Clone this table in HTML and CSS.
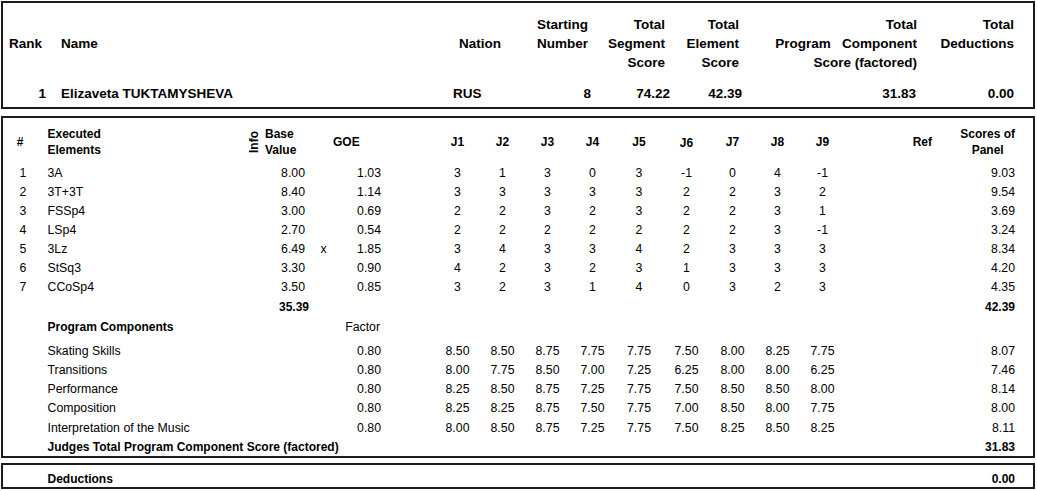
FILE: index.html
```html
<!DOCTYPE html>
<html>
<head>
<meta charset="utf-8">
<link rel="stylesheet" href="styles.css">
</head>
<body>
<div class="sheet">
  <section class="box summary">
    <div class="sum-grid sum-head">
      <div class="sh rank mid">Rank</div>
      <div class="sh name mid">Name</div>
      <div class="sh nation mid">Nation</div>
      <div class="sh start">Starting<br>Number</div>
      <div class="sh seg">Total<br>Segment<br>Score</div>
      <div class="sh el">Total<br>Element<br>Score</div>
      <div class="sh pcs">Total<br>Program&nbsp;&nbsp; Component<br>Score (factored)</div>
      <div class="sh ded">Total<br>Deductions</div>
    </div>
    <div class="sum-grid sum-data">
      <div class="sd rank">1</div>
      <div class="sd name">Elizaveta TUKTAMYSHEVA</div>
      <div class="sd nation">RUS</div>
      <div class="sd start">8</div>
      <div class="sd seg">74.22</div>
      <div class="sd el">42.39</div>
      <div class="sd pcs">31.83</div>
      <div class="sd ded">0.00</div>
    </div>
  </section>

  <section class="box details">
    <div class="row head">
      <div class="c-num hnum">#</div>
      <div class="c-name">Executed<br>Elements</div>
      <div class="c-info"><span class="info">Info</span></div>
      <div class="c-base hbase">Base<br>Value</div>
      <div class="c-goe-h">GOE</div>
      <div class="c-j1 j">J1</div>
      <div class="c-j2 j">J2</div>
      <div class="c-j3 j">J3</div>
      <div class="c-j4 j">J4</div>
      <div class="c-j5 j">J5</div>
      <div class="c-j6 j j6">J6</div>
      <div class="c-j7 j">J7</div>
      <div class="c-j8 j">J8</div>
      <div class="c-j9 j">J9</div>
      <div class="c-ref">Ref</div>
      <div class="c-panel hpanel">Scores of<br>Panel</div>
    </div>

    <div class="elements">
      <div class="row el"><div class="c-num">1</div><div class="c-name">3A</div><div class="c-base">8.00</div><div class="c-x"></div><div class="c-goe">1.03</div><div class="c-j1 j">3</div><div class="c-j2 j">1</div><div class="c-j3 j">3</div><div class="c-j4 j">0</div><div class="c-j5 j">3</div><div class="c-j6 j">-1</div><div class="c-j7 j">0</div><div class="c-j8 j">4</div><div class="c-j9 j">-1</div><div class="c-panel">9.03</div></div>
      <div class="row el"><div class="c-num">2</div><div class="c-name">3T+3T</div><div class="c-base">8.40</div><div class="c-x"></div><div class="c-goe">1.14</div><div class="c-j1 j">3</div><div class="c-j2 j">3</div><div class="c-j3 j">3</div><div class="c-j4 j">3</div><div class="c-j5 j">3</div><div class="c-j6 j">2</div><div class="c-j7 j">2</div><div class="c-j8 j">3</div><div class="c-j9 j">2</div><div class="c-panel">9.54</div></div>
      <div class="row el"><div class="c-num">3</div><div class="c-name">FSSp4</div><div class="c-base">3.00</div><div class="c-x"></div><div class="c-goe">0.69</div><div class="c-j1 j">2</div><div class="c-j2 j">2</div><div class="c-j3 j">3</div><div class="c-j4 j">2</div><div class="c-j5 j">3</div><div class="c-j6 j">2</div><div class="c-j7 j">2</div><div class="c-j8 j">3</div><div class="c-j9 j">1</div><div class="c-panel">3.69</div></div>
      <div class="row el"><div class="c-num">4</div><div class="c-name">LSp4</div><div class="c-base">2.70</div><div class="c-x"></div><div class="c-goe">0.54</div><div class="c-j1 j">2</div><div class="c-j2 j">2</div><div class="c-j3 j">2</div><div class="c-j4 j">2</div><div class="c-j5 j">2</div><div class="c-j6 j">2</div><div class="c-j7 j">2</div><div class="c-j8 j">3</div><div class="c-j9 j">-1</div><div class="c-panel">3.24</div></div>
      <div class="row el"><div class="c-num">5</div><div class="c-name">3Lz</div><div class="c-base">6.49</div><div class="c-x">x</div><div class="c-goe">1.85</div><div class="c-j1 j">3</div><div class="c-j2 j">4</div><div class="c-j3 j">3</div><div class="c-j4 j">3</div><div class="c-j5 j">4</div><div class="c-j6 j">2</div><div class="c-j7 j">3</div><div class="c-j8 j">3</div><div class="c-j9 j">3</div><div class="c-panel">8.34</div></div>
      <div class="row el"><div class="c-num">6</div><div class="c-name">StSq3</div><div class="c-base">3.30</div><div class="c-x"></div><div class="c-goe">0.90</div><div class="c-j1 j">4</div><div class="c-j2 j">2</div><div class="c-j3 j">3</div><div class="c-j4 j">2</div><div class="c-j5 j">3</div><div class="c-j6 j">1</div><div class="c-j7 j">3</div><div class="c-j8 j">3</div><div class="c-j9 j">3</div><div class="c-panel">4.20</div></div>
      <div class="row el"><div class="c-num">7</div><div class="c-name">CCoSp4</div><div class="c-base">3.50</div><div class="c-x"></div><div class="c-goe">0.85</div><div class="c-j1 j">3</div><div class="c-j2 j">2</div><div class="c-j3 j">3</div><div class="c-j4 j">1</div><div class="c-j5 j">4</div><div class="c-j6 j">0</div><div class="c-j7 j">3</div><div class="c-j8 j">2</div><div class="c-j9 j">3</div><div class="c-panel">4.35</div></div>
    </div>

    <div class="row totals">
      <div class="c-base total-base">35.39</div>
      <div class="c-panel">42.39</div>
    </div>

    <div class="row pc-title">
      <div class="c-label">Program Components</div>
      <div class="c-goe factor">Factor</div>
    </div>

    <div class="components">
      <div class="row pc"><div class="c-label">Skating Skills</div><div class="c-goe">0.80</div><div class="c-j1 j">8.50</div><div class="c-j2 j">8.50</div><div class="c-j3 j">8.75</div><div class="c-j4 j">7.75</div><div class="c-j5 j">7.75</div><div class="c-j6 j">7.50</div><div class="c-j7 j">8.00</div><div class="c-j8 j">8.25</div><div class="c-j9 j">7.75</div><div class="c-panel">8.07</div></div>
      <div class="row pc"><div class="c-label">Transitions</div><div class="c-goe">0.80</div><div class="c-j1 j">8.00</div><div class="c-j2 j">7.75</div><div class="c-j3 j">8.50</div><div class="c-j4 j">7.00</div><div class="c-j5 j">7.25</div><div class="c-j6 j">6.25</div><div class="c-j7 j">8.00</div><div class="c-j8 j">8.00</div><div class="c-j9 j">6.25</div><div class="c-panel">7.46</div></div>
      <div class="row pc"><div class="c-label">Performance</div><div class="c-goe">0.80</div><div class="c-j1 j">8.25</div><div class="c-j2 j">8.50</div><div class="c-j3 j">8.75</div><div class="c-j4 j">7.25</div><div class="c-j5 j">7.75</div><div class="c-j6 j">7.50</div><div class="c-j7 j">8.50</div><div class="c-j8 j">8.50</div><div class="c-j9 j">8.00</div><div class="c-panel">8.14</div></div>
      <div class="row pc"><div class="c-label">Composition</div><div class="c-goe">0.80</div><div class="c-j1 j">8.25</div><div class="c-j2 j">8.25</div><div class="c-j3 j">8.75</div><div class="c-j4 j">7.50</div><div class="c-j5 j">7.75</div><div class="c-j6 j">7.00</div><div class="c-j7 j">8.50</div><div class="c-j8 j">8.00</div><div class="c-j9 j">7.75</div><div class="c-panel">8.00</div></div>
      <div class="row pc"><div class="c-label">Interpretation of the Music</div><div class="c-goe">0.80</div><div class="c-j1 j">8.00</div><div class="c-j2 j">8.50</div><div class="c-j3 j">8.75</div><div class="c-j4 j">7.25</div><div class="c-j5 j">7.75</div><div class="c-j6 j">7.50</div><div class="c-j7 j">8.25</div><div class="c-j8 j">8.50</div><div class="c-j9 j">8.25</div><div class="c-panel">8.11</div></div>
      <div class="row pc pc-total"><div class="c-label-wide">Judges Total Program Component Score (factored)</div><div class="c-panel">31.83</div></div>
    </div>
  </section>

  <section class="box deductions">
    <div class="ded-label">Deductions</div>
    <div class="ded-value">0.00</div>
  </section>
</div>
</body>
</html>
```
FILE: styles.css
```css
* { box-sizing: border-box; }
html, body { margin: 0; padding: 0; background: #fff; }
body {
  font-family: "Liberation Sans", Arial, sans-serif;
  color: #000;
}
.sheet {
  padding: 1px 0 0 1px;
  width: 1036px;
}
.box {
  border: 2px solid #1c1c1c;
  width: 1034px;
}

/* ---------- summary box ---------- */
.summary {
  padding: 12px 18px 4.5px 0;
  font-size: 13.5px;
  font-weight: bold;
  line-height: 19px;
}
.sum-grid {
  display: grid;
  grid-template-columns: 47px 390px 80px 73px 77px 72px 175px 98px;
}
.sum-head { height: 57px; }
.sum-data { margin-top: 11.5px; height: 19px; }
.sh { align-self: start; }
.sh.mid { align-self: center; }
.sh.rank { padding-left: 6px; }
.sh.name { padding-left: 11px; }
.sh.nation { padding-left: 19px; }
.sh.start { text-align: right; padding-right: 5px; }
.sh.seg { text-align: right; padding-right: 5px; }
.sh.el { text-align: right; padding-right: 3px; }
.sh.pcs { text-align: right; padding-right: 0; }
.sh.ded { text-align: right; padding-right: 1px; }

.sd.rank { text-align: right; padding-right: 4px; }
.sd.name { padding-left: 11px; }
.sd.nation { padding-left: 13px; }
.sd.start { text-align: right; padding-right: 2px; }
.sd.seg { text-align: right; padding-right: 0; }
.sd.el { text-align: right; padding-right: 0; }
.sd.pcs { text-align: right; padding-right: 1px; }
.sd.ded { text-align: right; padding-right: 1px; }

/* ---------- details box ---------- */
.details {
  margin-top: 7px;
  padding: 8px 16px 0 0;
  font-size: 12.3px;
}
.row {
  display: grid;
  grid-template-columns: 40px 202px 17px 45px 33px 43px 52px 45px 45px 45px 45px 48px 47px 45px 45px 45px 95px 77px;
  align-items: center;
  height: 19px;
  line-height: 16px;
  white-space: nowrap;
}
.c-num { grid-column: 1; text-align: center; }
.c-name { grid-column: 2; padding-left: 4.5px; }
.c-info { grid-column: 3; display: flex; justify-content: center; align-items: center; height: 32px; }
.c-base { grid-column: 4; text-align: right; padding-right: 2px; }
.c-x { grid-column: 5; text-align: center; }
.c-goe { grid-column: 6; text-align: right; padding-right: 2px; }
.c-goe-h { grid-column: 5 / 7; padding-left: 26px; }
.c-j1 { grid-column: 8; }
.c-j2 { grid-column: 9; }
.c-j3 { grid-column: 10; }
.c-j4 { grid-column: 11; }
.c-j5 { grid-column: 12; }
.c-j6 { grid-column: 13; }
.c-j7 { grid-column: 14; }
.c-j8 { grid-column: 15; }
.c-j9 { grid-column: 16; }
.j { text-align: center; }
.c-ref { grid-column: 17; text-align: right; padding-right: 8px; }
.c-panel { grid-column: 18; text-align: right; padding-right: 2px; }
.c-label { grid-column: 2 / 6; padding-left: 4.5px; }
.c-label-wide { grid-column: 2 / 8; padding-left: 4.5px; font-weight: bold; font-size: 12px; }

.head {
  height: 32px;
  font-weight: bold;
  font-size: 12px;
}
.head > div { align-self: center; }
.head .c-name, .head .hbase, .head .c-panel { align-self: start; }
.head .hbase { text-align: left; padding-left: 3px; padding-right: 0; }
.head .hnum { padding-right: 6px; }
.head .j6 { padding-top: 2px; }
.head .hpanel {
  justify-self: end;
  text-align: center;
  padding-right: 2px;
}
.info {
  display: inline-block;
  transform: rotate(-90deg);
  font-size: 12px;
  font-weight: bold;
  line-height: 10px;
}

.elements { margin-top: 5px; }

.totals {
  margin-top: 1.5px;
  font-weight: bold;
  font-size: 12px;
}
.total-base { padding-right: 0; margin-right: -2px; }

.pc-title {
  margin-top: 1.3px;
}
.pc-title .c-label { font-weight: bold; font-size: 12px; }
.factor { padding-right: 3px; }

.components { margin-top: 4.4px; }
.pc { height: 19.2px; }
.pc-total .c-panel { font-weight: bold; font-size: 12px; }

/* ---------- deductions ---------- */
.deductions {
  margin-top: 4.6px;
  height: 26px;
  padding: 5px 18px 0 44.5px;
  display: flex;
  justify-content: space-between;
  font-size: 12px;
  font-weight: bold;
  line-height: 19px;
}
```
